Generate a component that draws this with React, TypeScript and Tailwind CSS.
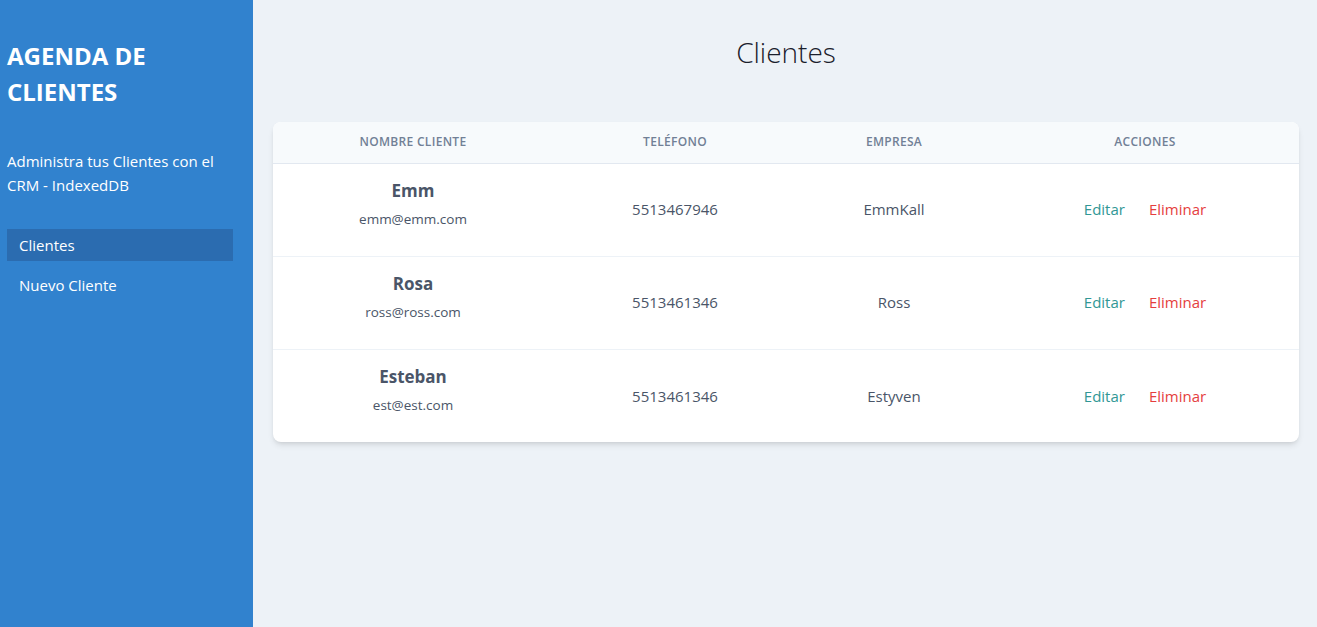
import React from "react";

type Cliente = {
  nombre: string;
  email: string;
  telefono: string;
  empresa: string;
};

const CLIENTES: Cliente[] = [
  { nombre: "Emm", email: "emm@emm.com", telefono: "5513467946", empresa: "EmmKall" },
  { nombre: "Rosa", email: "ross@ross.com", telefono: "5513461346", empresa: "Ross" },
  { nombre: "Esteban", email: "est@est.com", telefono: "5513461346", empresa: "Estyven" },
];

const FONT = { fontFamily: '"Open Sans", "Noto Sans", sans-serif' };

export default function App() {
  return (
    <div style={FONT} className="flex min-h-[627px] w-full">
      <aside className="w-[253px] shrink-0 bg-[#3182ce] pl-[7px] pr-5 pt-[38px]">
        <h1 className="text-[24px] leading-9 font-bold uppercase text-white">Agenda de Clientes</h1>
        <p className="mt-[39px] text-[15px] leading-6 text-white">
          Administra tus Clientes con el CRM - IndexedDB
        </p>
        <nav className="mt-[32px] flex flex-col gap-2">
          <a href="#" className="block h-8 bg-[#2b6cb0] px-3 text-[15px] leading-8 text-white">
            Clientes
          </a>
          <a href="#" className="block h-8 px-3 text-[15px] leading-8 text-white">
            Nuevo Cliente
          </a>
        </nav>
      </aside>

      <main className="flex-1 bg-[#edf2f7] pl-5 pr-[18px]">
        <h2 className="mt-[34px] text-center text-[28px] leading-9 font-light text-[#1a202c]">Clientes</h2>

        <div className="mt-[52px] overflow-hidden rounded-lg bg-white shadow-md">
          <table className="w-full table-fixed border-collapse">
            <thead>
              <tr className="h-[41px] border-b border-[#e2e8f0] bg-[#f7fafc] text-[12px] font-semibold uppercase tracking-wide text-[#718096]">
                <th className="w-[280px] font-semibold">Nombre Cliente</th>
                <th className="w-[244px] font-semibold">Teléfono</th>
                <th className="w-[194px] font-semibold">Empresa</th>
                <th className="font-semibold">Acciones</th>
              </tr>
            </thead>
            <tbody>
              {CLIENTES.map((cliente, index) => (
                <tr
                  key={index}
                  className={
                    index < CLIENTES.length - 1
                      ? "h-[93px] border-b border-[#edf2f7] text-center text-[#4a5568]"
                      : "h-[93px] text-center text-[#4a5568]"
                  }
                >
                  <td className="pb-[11px]">
                    <p className="text-[17px] leading-6 font-bold text-[#4a5568]">{cliente.nombre}</p>
                    <p className="mt-[6px] text-[13.5px] leading-5 text-[#4a5568]">{cliente.email}</p>
                  </td>
                  <td className="text-[15px]">{cliente.telefono}</td>
                  <td className="text-[15px]">{cliente.empresa}</td>
                  <td className="text-[15px]">
                    <a href="#" className="mr-6 text-[#319795]">Editar</a>
                    <a href="#" className="text-[#e53e3e]">Eliminar</a>
                  </td>
                </tr>
              ))}
            </tbody>
          </table>
        </div>
      </main>
    </div>
  );
}
